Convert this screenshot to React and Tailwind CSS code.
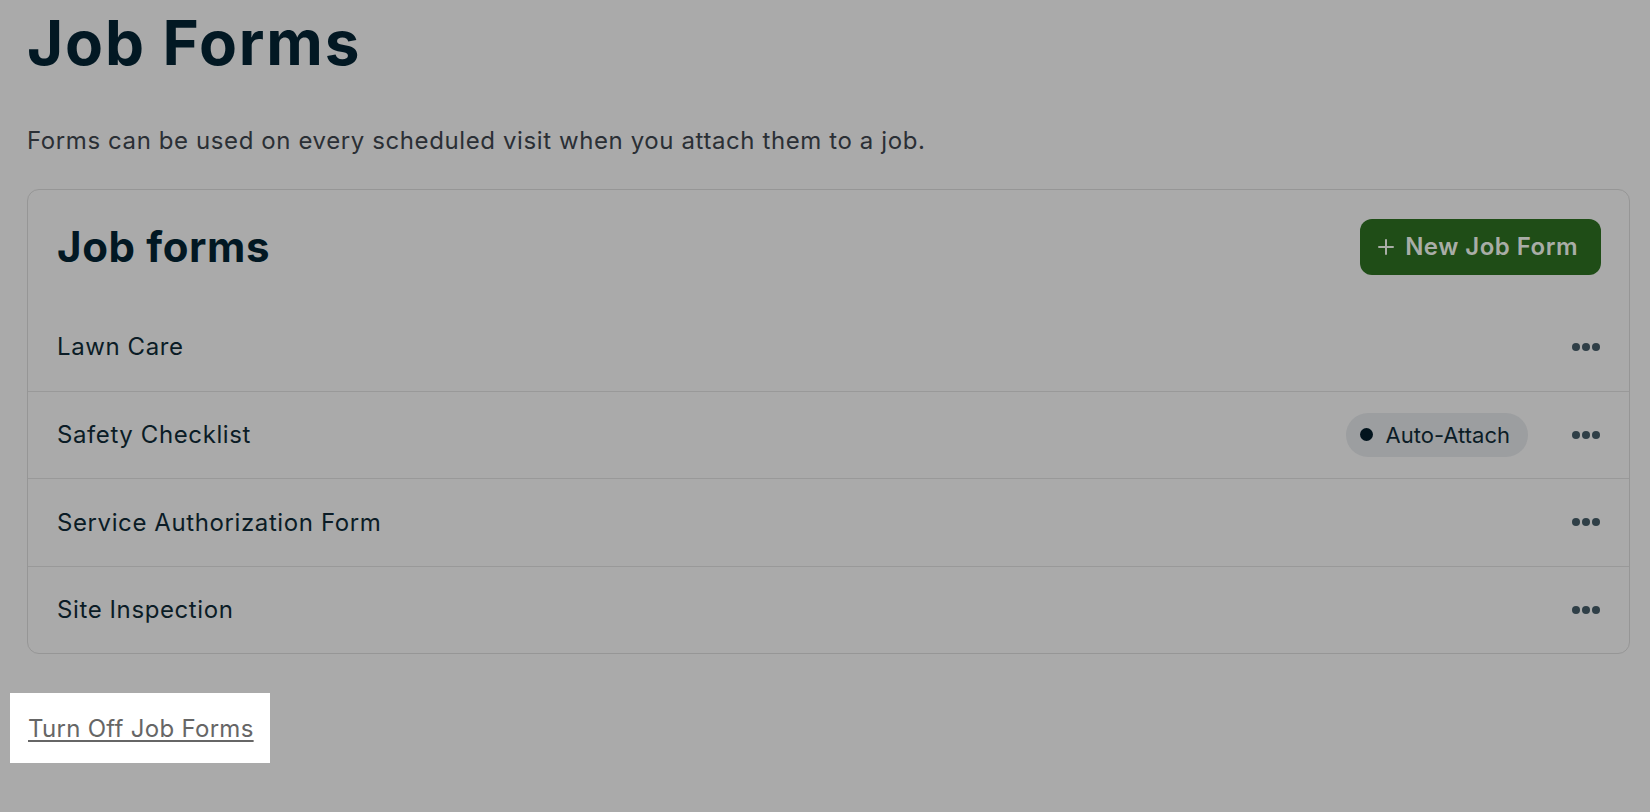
import React from "react";

const rows = [
  { name: "Lawn Care", auto: false },
  { name: "Safety Checklist", auto: true },
  { name: "Service Authorization Form", auto: false },
  { name: "Site Inspection", auto: false },
];

function Dots() {
  return (
    <div className="flex items-center gap-[2px] w-[29px] h-[8px]">
      <span className="w-[8px] h-[8px] rounded-full bg-[#2f3f47]" />
      <span className="w-[8px] h-[8px] rounded-full bg-[#2f3f47]" />
      <span className="w-[8px] h-[8px] rounded-full bg-[#2f3f47]" />
    </div>
  );
}

export default function App() {
  return (
    <div
      className="w-full h-[812px] bg-[#aaaaaa] pl-[27px] pr-[20px] overflow-hidden"
      style={{ fontFamily: "Inter, 'Noto Sans', sans-serif" }}
    >
      <h1 className="pt-[12px] text-[62px] leading-[62px] font-bold tracking-[0.03em] text-[#021823]">
        Job Forms
      </h1>
      <p className="mt-[55px] text-[24px] leading-[24px] tracking-[0.025em] text-[#2a2f35]">
        Forms can be used on every scheduled visit when you attach them to a job.
      </p>

      <div className="mt-[36px] border border-[#969696] rounded-[12px]">
        <div className="h-[113px] flex items-center justify-between pl-[29px] pr-[28px]">
          <h2 className="pt-[1px] text-[42px] leading-[42px] font-bold tracking-[0.015em] text-[#021823]">
            Job forms
          </h2>
          <button className="h-[56px] pl-[18px] pr-[23px] rounded-[12px] bg-[#1f4d17] flex items-center gap-[11px] text-[#a9ada7] text-[24px] leading-[24px] font-semibold tracking-[0.02em]">
            <svg width="16" height="16" viewBox="0 0 16 16" fill="none" stroke="#a9ada7" strokeWidth="2" strokeLinecap="round">
              <path d="M8 1v14M1 8h14" />
            </svg>
            <span>New Job Form</span>
          </button>
        </div>
        {rows.map((r, i) => (
          <div
            key={r.name}
            className={
              "h-[87.5px] flex items-center justify-between pl-[29px] pr-[28px] " +
              (i > 0 ? "border-t border-[#999999]" : "")
            }
          >
            <span className="pt-[1px] text-[24px] leading-[24px] tracking-[0.025em] text-[#0b1c26]">{r.name}</span>
            <div className="flex items-center gap-[44px]">
              {r.auto && (
                <span className="h-[44px] rounded-full bg-[#9c9ea0] flex items-center pl-[14px] pr-[18px] gap-[13px]">
                  <span className="w-[13px] h-[13px] rounded-full bg-[#02141d]" />
                  <span className="text-[22px] leading-[22px] text-[#0b1c26]">Auto-Attach</span>
                </span>
              )}
              <Dots />
            </div>
          </div>
        ))}
      </div>

      <div className="mt-[39px] -ml-[17px] w-[260px] h-[70px] bg-white flex items-center pl-[18px]">
        <a className="pt-[2px] text-[24px] leading-[24px] tracking-[0.012em] text-[#666666] underline decoration-2 underline-offset-[3px] cursor-pointer">
          Turn Off Job Forms
        </a>
      </div>
    </div>
  );
}
